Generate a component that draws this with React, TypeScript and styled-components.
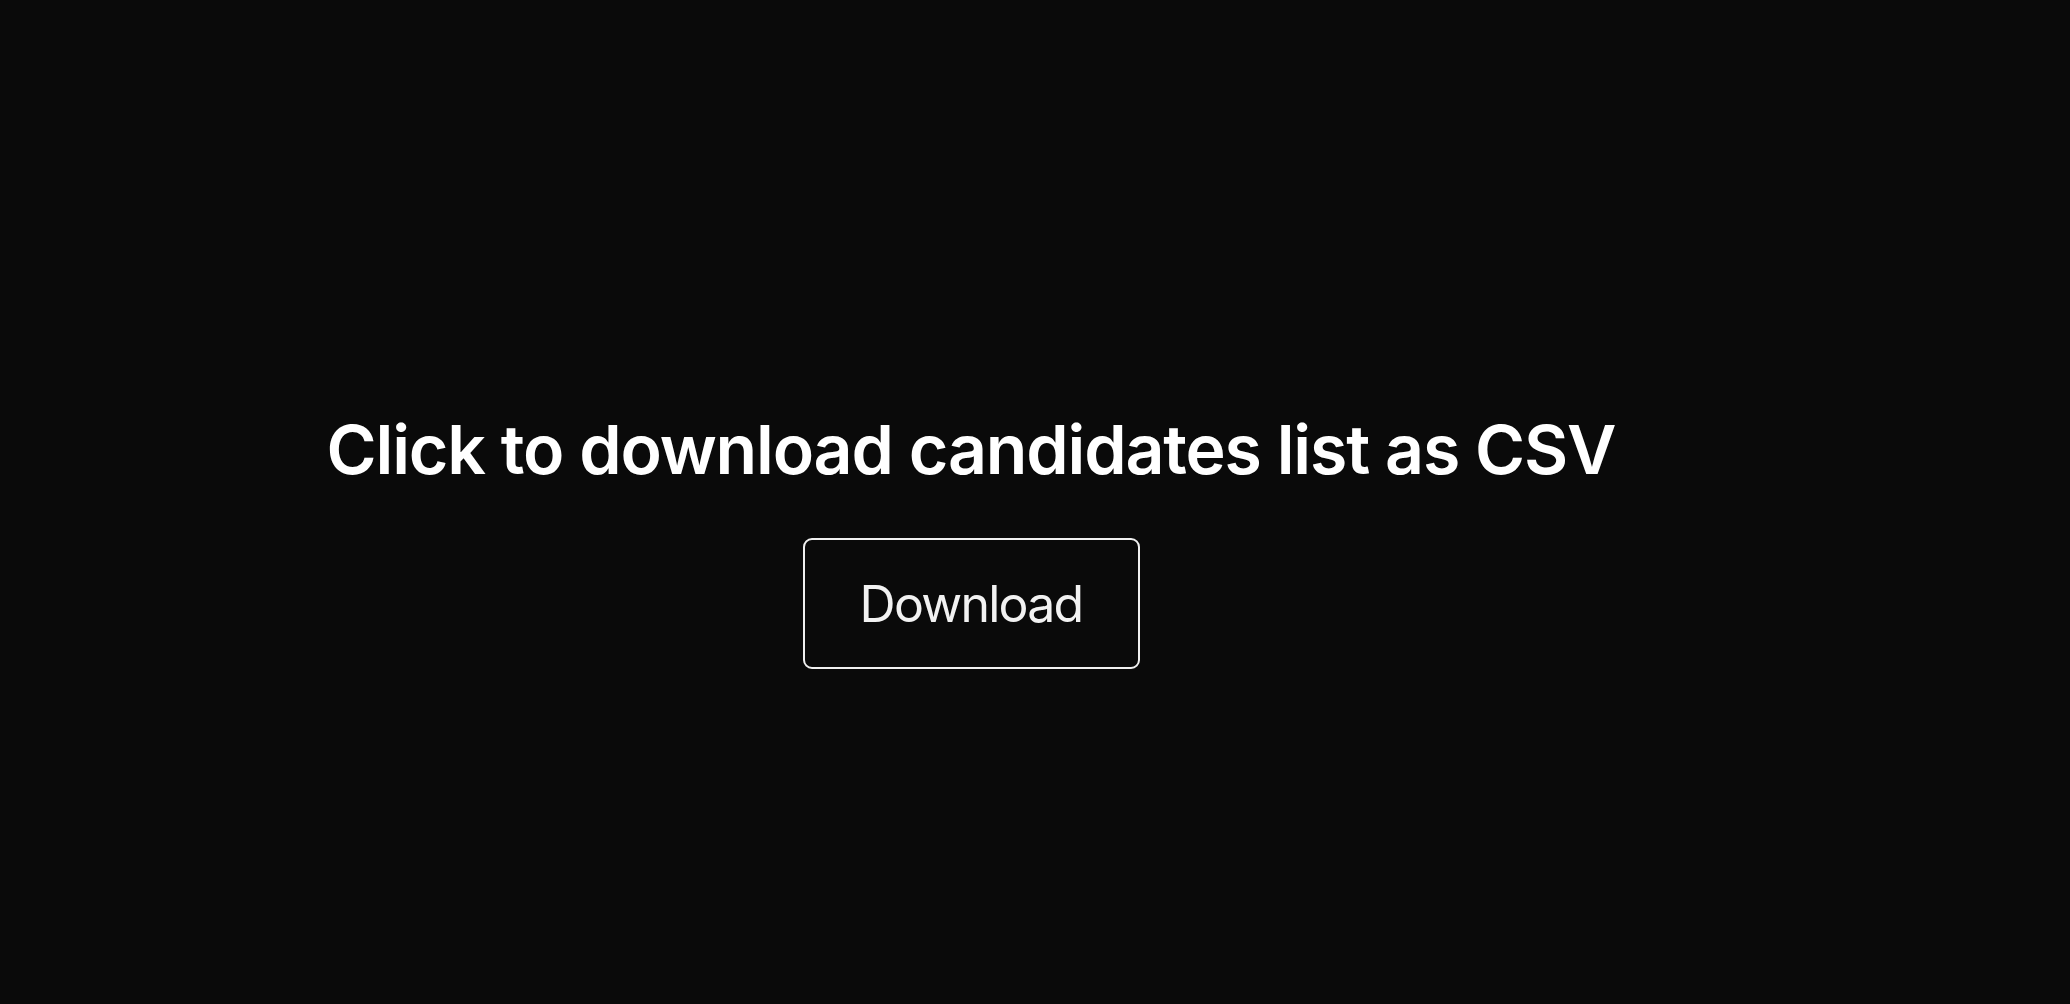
import styled, { createGlobalStyle } from "styled-components"

const GlobalStyle = createGlobalStyle`
  html, body {
    margin:0;
    padding:0;
    background:#0a0a0a;
  }
  body {
    font-family:Inter, "Noto Sans", "Liberation Sans", sans-serif;
    color:#ededed;
  }
`

const Page = styled.main`
  min-height:100vh;
  box-sizing:border-box;
  padding:76px 128px 0 0;
  display:flex;
  flex-direction:column;
  align-items:center;
  justify-content:center;
  gap:51px;
`

const Title = styled.h1`
  margin:0;
  font-size:68px;
  font-weight:600;
  letter-spacing:-0.017em;
  line-height:76px;
  color:#ffffff;
`

const DownloadButton = styled.button`
  box-sizing:border-box;
  width:337px;
  height:131px;
  padding:0;
  background:transparent;
  color:#f2f2f2;
  border:2px solid #f0f0f0;
  border-radius:9px;
  font-family:inherit;
  font-size:50px;
  font-weight:400;
  letter-spacing:-0.035em;
  cursor:pointer;
  &:hover {
    background:#1a1a1a;
  }
`

const App = () => {
  return (
    <>
      <GlobalStyle />
      <Page>
        <Title>Click to download candidates list as CSV</Title>
        <DownloadButton>Download</DownloadButton>
      </Page>
    </>
  )
}

export default App
